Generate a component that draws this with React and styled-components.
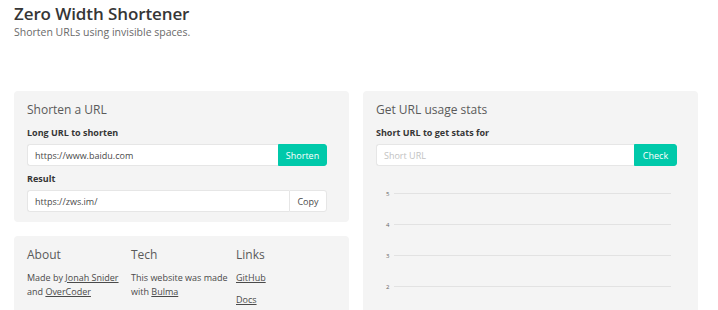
import React from "react";
import styled, { createGlobalStyle } from "styled-components";

const Global = createGlobalStyle`
  html, body {
    margin: 0;
    padding: 0;
    background: #fff;
    font-family: "Open Sans", "Noto Sans", sans-serif;
    color: #4a4a4a;
  }
`;

const Page = styled.div`
  width: 718px;
  height: 310px;
  overflow: hidden;
  box-sizing: border-box;
  padding: 3px 20px 0 14px;
`;

const Title = styled.h1`
  margin: 0;
  font-size: 17px;
  font-weight: 600;
  color: #363636;
  line-height: 22px;
  letter-spacing: -0.1px;
`;

const Subtitle = styled.p`
  margin: 0;
  font-size: 10.5px;
  color: #6a6a6a;
  line-height: 14px;
`;

const Columns = styled.div`
  display: grid;
  grid-template-columns: 335px 335px;
  column-gap: 14px;
  margin-top: 52px;
  align-items: start;
`;

const Stack = styled.div`
  display: flex;
  flex-direction: column;
  gap: 14px;
`;

const Box = styled.section`
  background: #f4f4f4;
  border-radius: 4px;
  padding: 11px 13px;
  box-sizing: border-box;
  height: ${(p) => p.h || "auto"};
`;

const BoxTitle = styled.h2`
  margin: 0 0 9px;
  font-size: 12px;
  font-weight: 400;
  color: #5a5a5a;
  line-height: 16px;
`;

const Label = styled.div`
  font-size: 9px;
  font-weight: 700;
  color: #363636;
  line-height: 12px;
  margin-bottom: 5px;
`;

const Field = styled.div`
  display: flex;
  height: 22px;
  margin-right: ${(p) => p.mr || 0}px;
  margin-bottom: ${(p) => p.mb || 0}px;
`;

const Input = styled.div`
  flex: 1;
  background: #fff;
  border: 1px solid #e6e6e6;
  border-right: none;
  border-radius: 3px 0 0 3px;
  box-sizing: border-box;
  font-size: 9px;
  color: ${(p) => (p.$muted ? "#c2c2c2" : "#4a4a4a")};
  display: flex;
  align-items: center;
  padding-left: 7px;
`;

const Button = styled.div`
  width: ${(p) => p.w}px;
  box-sizing: border-box;
  border-radius: 0 3px 3px 0;
  display: flex;
  align-items: center;
  justify-content: center;
  font-size: 9px;
  background: ${(p) => (p.$primary ? "#00c9aa" : "#fff")};
  color: ${(p) => (p.$primary ? "#fff" : "#4a4a4a")};
  border: 1px solid ${(p) => (p.$primary ? "#00c9aa" : "#e6e6e6")};
`;

const Footer = styled.div`
  display: grid;
  grid-template-columns: 104px 105px 1fr;
`;

const FootHead = styled.h3`
  margin: 0 0 8px;
  font-size: 12px;
  font-weight: 400;
  color: #5a5a5a;
  line-height: 16px;
`;

const FootText = styled.p`
  margin: 0 0 ${(p) => p.mb || 0}px;
  font-size: 9px;
  line-height: 14px;
  color: #4a4a4a;
  a {
    color: #4a4a4a;
    text-decoration: underline;
  }
`;

const Chart = styled.div`
  display: flex;
  flex-direction: column;
  gap: 20px;
  margin: 22px 14px 0 10px;
`;

const Tick = styled.div`
  display: flex;
  align-items: center;
  height: 11px;
  gap: 5px;
  font-size: 6px;
  color: #666;
  span {
    width: 3px;
  }
  &::after {
    content: "";
    flex: 1;
    border-top: 1px solid #e2e2e2;
  }
`;

export default function App() {
  return (
    <>
      <Global />
      <Page>
        <Title>Zero Width Shortener</Title>
        <Subtitle>Shorten URLs using invisible spaces.</Subtitle>
        <Columns>
          <Stack>
            <Box h="131px">
              <BoxTitle>Shorten a URL</BoxTitle>
              <Label>Long URL to shorten</Label>
              <Field mr={9} mb={7}>
                <Input>https://www.baidu.com</Input>
                <Button $primary w={49}>Shorten</Button>
              </Field>
              <Label>Result</Label>
              <Field mr={9}>
                <Input>https://zws.im/</Input>
                <Button w={38}>Copy</Button>
              </Field>
            </Box>
            <Box h="120px">
              <Footer>
                <div>
                  <FootHead>About</FootHead>
                  <FootText mb={8}>
                    Made by <a>Jonah Snider</a>
                    <br />
                    and <a>OverCoder</a>
                  </FootText>
                  <FootText>A big thanks to everyone</FootText>
                </div>
                <div>
                  <FootHead>Tech</FootHead>
                  <FootText mb={8}>
                    This website was made
                    <br />
                    with <a>Bulma</a>
                  </FootText>
                  <FootText>The source code is licensed</FootText>
                </div>
                <div>
                  <FootHead>Links</FootHead>
                  <FootText mb={8}>
                    <a>GitHub</a>
                  </FootText>
                  <FootText>
                    <a>Docs</a>
                  </FootText>
                </div>
              </Footer>
            </Box>
          </Stack>
          <Box h="240px">
            <BoxTitle>Get URL usage stats</BoxTitle>
            <Label>Short URL to get stats for</Label>
            <Field mr={8}>
              <Input $muted>Short URL</Input>
              <Button $primary w={43}>Check</Button>
            </Field>
            <Chart>
              {[5, 4, 3, 2].map((n) => (
                <Tick key={n}>
                  <span>{n}</span>
                </Tick>
              ))}
            </Chart>
          </Box>
        </Columns>
      </Page>
    </>
  );
}
